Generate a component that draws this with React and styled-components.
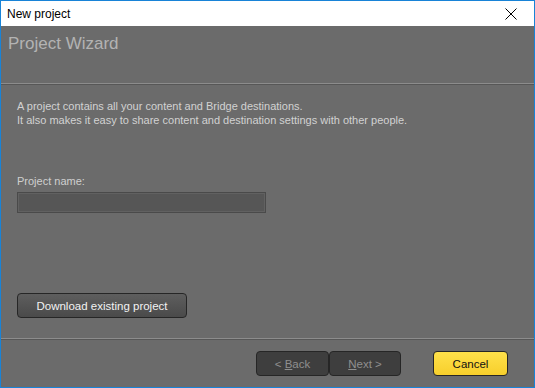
import React from "react"
import styled, { createGlobalStyle } from "styled-components"

const GlobalStyle = createGlobalStyle`
  html, body {
    margin: 0;
    padding: 0;
    background: #6b6b6b;
  }
`

// window frame
const Window = styled.div`
  width: 535px;
  height: 388px;
  box-sizing: border-box;
  border: 1px solid #1883d7;
  display: flex;
  flex-direction: column;
  background: #6b6b6b;
  font-family: "Liberation Sans", Arial, sans-serif;
  overflow: hidden;
`

const TitleBar = styled.div`
  height: 25px;
  background: #fff;
  display: flex;
  align-items: center;
  justify-content: space-between;
  padding: 0 0 0 6px;
  flex-shrink: 0;
`

const TitleText = styled.span`
  font-size: 12px;
  color: #000;
`

const CloseButton = styled.div`
  width: 46px;
  height: 25px;
  display: flex;
  align-items: center;
  justify-content: center;
`

const Header = styled.div`
  height: 57px;
  box-sizing: border-box;
  padding: 8px 7px 0;
  flex-shrink: 0;
`

const HeaderTitle = styled.h1`
  margin: 0;
  font-size: 17px;
  font-weight: normal;
  color: #b3b3b3;
`

const Divider = styled.div`
  height: 1px;
  background: #8c8c8c;
  border-bottom: 1px solid #575757;
  flex-shrink: 0;
`

const Body = styled.div`
  flex: 1;
  padding: 14px 16px 0;
  display: flex;
  flex-direction: column;
`

const Description = styled.p`
  margin: 0;
  font-size: 11px;
  line-height: 14px;
  color: #d2d2d2;
`

const Label = styled.label`
  margin-top: 47px;
  font-size: 11px;
  line-height: 14px;
  color: #cfcfcf;
`

const NameInput = styled.input`
  margin-top: 4px;
  width: 249px;
  height: 21px;
  box-sizing: border-box;
  background: #565656;
  border: 1px solid #4a4a4a;
  box-shadow: inset 0 0 0 1px #616161;
  outline: none;
  padding: 0 4px;
  color: #ddd;
  font-family: inherit;
  font-size: 11px;
`

const Spacer = styled.div`
  flex: 1;
`

const Button = styled.button`
  height: 25px;
  box-sizing: border-box;
  border: 1px solid #262626;
  border-radius: 4px;
  font-family: "Liberation Sans", Arial, sans-serif;
  font-size: 11.5px;
  padding: 0;
  cursor: pointer;
  background: ${p =>
    p.$primary
      ? "linear-gradient(#ffe14a, #f7cf2c)"
      : p.$disabled
      ? "#3e3e3e"
      : "linear-gradient(#5e5e5e, #4a4a4a)"};
  color: ${p => (p.$primary ? "#111" : p.$disabled ? "#8f8f8f" : "#f2f2f2")};
  width: ${p => p.$w}px;
  u {
    text-decoration: underline;
  }
`

const DownloadButton = styled(Button)`
  margin-bottom: 20px;
`

const Footer = styled.div`
  height: 47px;
  box-sizing: border-box;
  padding: 11px 26px 0 0;
  display: flex;
  justify-content: flex-end;
  flex-shrink: 0;
`

const NavGroup = styled.div`
  display: flex;
  margin-right: 32px;
`

const CloseIcon = () => (
  <svg width="12" height="12" viewBox="0 0 12 12">
    <path d="M0.5 0.5 L11.5 11.5 M11.5 0.5 L0.5 11.5" stroke="#000" strokeWidth="1" />
  </svg>
)

export default function App() {
  return (
    <>
      <GlobalStyle />
      <Window>
        <TitleBar>
          <TitleText>New project</TitleText>
          <CloseButton>
            <CloseIcon />
          </CloseButton>
        </TitleBar>
        <Header>
          <HeaderTitle>Project Wizard</HeaderTitle>
        </Header>
        <Divider />
        <Body>
          <Description>
            A project contains all your content and Bridge destinations.
            <br />
            It also makes it easy to share content and destination settings with other people.
          </Description>
          <Label>Project name:</Label>
          <NameInput />
          <Spacer />
          <DownloadButton $w={170}>Download existing project</DownloadButton>
        </Body>
        <Divider />
        <Footer>
          <NavGroup>
            <Button $disabled $w={73}>
              &lt; <u>B</u>ack
            </Button>
            <Button $disabled $w={72}>
              <u>N</u>ext &gt;
            </Button>
          </NavGroup>
          <Button $primary $w={75}>Cancel</Button>
        </Footer>
      </Window>
    </>
  )
}
